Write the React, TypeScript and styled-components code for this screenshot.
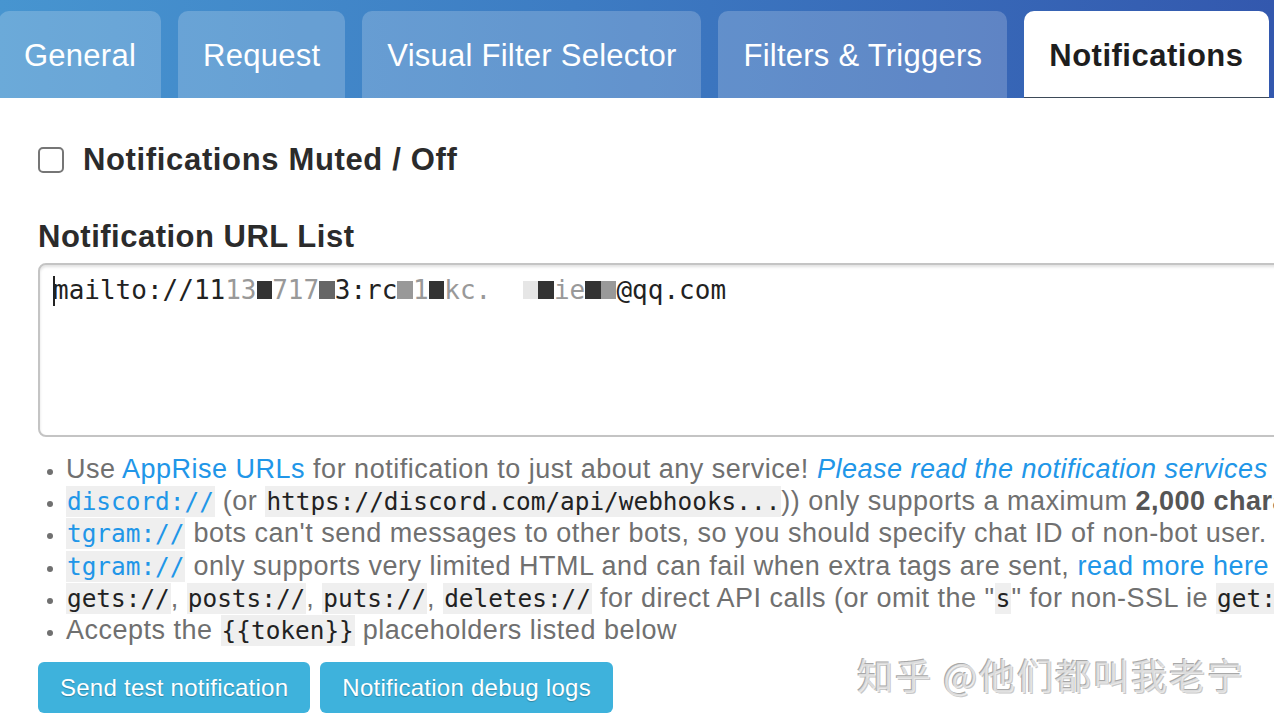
import React from "react";
import styled, { createGlobalStyle } from "styled-components";

const GlobalStyle = createGlobalStyle`
  html, body {
    margin: 0;
    padding: 0;
    background: #fff;
    overflow: hidden;
  }
  body {
    font-family: "Liberation Sans", Arial, sans-serif;
    color: #333;
  }
`;

const Page = styled.div`
  position: relative;
  width: 1274px;
  height: 726px;
  overflow: hidden;
  background: #fff;
`;

// tab bar

const TabBar = styled.nav`
  display: flex;
  align-items: flex-end;
  gap: 17px;
  height: 98px;
  margin-left: -1px;
  background: linear-gradient(90deg, #4795d0 0%, #3d7cc3 45%, #3358ae 100%);
`;

const Tab = styled.div<{ $active?: boolean }>`
  display: flex;
  align-items: center;
  flex-shrink: 0;
  height: 87px;
  padding: 3px 25px 0;
  box-sizing: border-box;
  border-radius: 10px 10px 0 0;
  font-size: 31px;
  white-space: nowrap;
  letter-spacing: ${({ $active }) => ($active ? "0.5px" : "0.25px")};
  font-weight: ${({ $active }) => ($active ? 700 : 400)};
  color: ${({ $active }) => ($active ? "#1e1e1e" : "#fff")};
  background: ${({ $active }) => ($active ? "#fff" : "rgba(255, 255, 255, 0.2)")};
  border-bottom: 1px solid ${({ $active }) => ($active ? "#3d4a58" : "transparent")};
`;

// body

const Content = styled.div`
  display: flex;
  flex-direction: column;
  padding: 0 0 0 38px;
  width: 1500px;
`;

const MuteRow = styled.label`
  display: flex;
  align-items: center;
  gap: 19px;
  margin-top: 47px;
  height: 30px;
`;

const Checkbox = styled.span`
  width: 26px;
  height: 26px;
  box-sizing: border-box;
  border: 2px solid #767676;
  border-radius: 5px;
  background: #fff;
`;

const BigLabel = styled.span`
  font-size: 31px;
  font-weight: 700;
  letter-spacing: 0.65px;
  color: #2b2b2b;
`;

const SectionTitle = styled.h3`
  margin: 45px 0 0;
  font-size: 31px;
  font-weight: 700;
  letter-spacing: 0.5px;
  color: #2b2b2b;
  line-height: 34px;
`;

const UrlBox = styled.div`
  margin-top: 9px;
  height: 174px;
  box-sizing: border-box;
  border: 2px solid #c4c4c4;
  border-radius: 8px;
  box-shadow: inset 0 2px 3px rgba(0, 0, 0, 0.12);
  padding: 9px 13px;
  font-family: "DejaVu Sans Mono", "Liberation Mono", monospace;
  font-size: 26px;
  line-height: 32px;
  color: #222;
  white-space: pre;
`;

const Caret = styled.span`
  display: inline-block;
  width: 2px;
  height: 30px;
  margin-right: -2px;
  vertical-align: -7px;
  background: #222;
`;

const Redact = styled.span<{ $tone: string }>`
  display: inline-block;
  width: 1ch;
  height: 18px;
  background: ${({ $tone }) => $tone};
`;

const Faint = styled.span`
  color: #999;
`;

const HintList = styled.ul`
  margin: 16px 0 0;
  padding-left: 28px;
  font-size: 27px;
  letter-spacing: 0.5px;
  color: #707070;
  white-space: nowrap;

  li {
    height: 32.2px;
    line-height: 32px;
  }
  li::marker {
    font-size: 20px;
  }
`;

const Link = styled.a<{ $italic?: boolean }>`
  color: #2196e8;
  text-decoration: none;
  font-style: ${({ $italic }) => ($italic ? "italic" : "normal")};
`;

const Code = styled.code<{ $link?: boolean }>`
  font-family: "DejaVu Sans Mono", "Liberation Mono", monospace;
  font-size: 24.4px;
  letter-spacing: 0;
  line-height: 28px;
  padding: 1px 1px;
  background: #efefef;
  color: ${({ $link }) => ($link ? "#2196e8" : "#222")};
`;

const Strong = styled.b`
  color: #555;
`;

const ButtonRow = styled.div`
  display: flex;
  gap: 10px;
  margin-top: 16px;
`;

const Button = styled.button`
  height: 51px;
  padding: 0 22px;
  border: none;
  border-radius: 6px;
  background: #3eb2dc;
  color: #fff;
  font-family: "Liberation Sans", Arial, sans-serif;
  font-size: 24px;
  letter-spacing: 0.25px;
  text-shadow: 0 1px 1px rgba(0, 0, 0, 0.25);
  cursor: pointer;
`;

const Watermark = styled.div`
  position: absolute;
  left: 857px;
  top: 648px;
  font-family: "Noto Sans CJK SC", sans-serif;
  font-size: 36px;
  color: rgba(255, 255, 255, 0.6);
  text-shadow: -1px -1px 0 #a8a8a8, 1px 1px 0 #c8c8c8;
  letter-spacing: 2px;
`;

const tabs = ["General", "Request", "Visual Filter Selector", "Filters & Triggers", "Notifications"];

export default function App() {
  return (
    <Page>
      <GlobalStyle />
      <TabBar>
        {tabs.map((t) => (
          <Tab key={t} $active={t === "Notifications"}>
            {t}
          </Tab>
        ))}
      </TabBar>

      <Content>
        <MuteRow>
          <Checkbox />
          <BigLabel>Notifications Muted / Off</BigLabel>
        </MuteRow>

        <SectionTitle>Notification URL List</SectionTitle>

        <UrlBox>
          <Caret />
          mailto://11<Faint>13</Faint>
          <Redact $tone="#333" />
          <Faint>717</Faint>
          <Redact $tone="#666" />
          3:rc
          <Redact $tone="#999" />
          <Faint>1</Faint>
          <Redact $tone="#333" />
          <Faint>kc.</Faint>
          {"  "}
          <Redact $tone="#e6e6e6" />
          <Redact $tone="#333" />
          <Faint>ie</Faint>
          <Redact $tone="#333" />
          <Redact $tone="#999" />
          @qq.com
        </UrlBox>

        <HintList>
          <li>
            Use <Link>AppRise URLs</Link> for notification to just about any service!{" "}
            <Link $italic>Please read the notification services wiki</Link>
          </li>
          <li>
            <Code $link>discord://</Code> (or <Code>https://discord.com/api/webhooks...</Code>)) only supports a maximum{" "}
            <Strong>2,000 characters</Strong>
          </li>
          <li>
            <Code $link>tgram://</Code> bots can't send messages to other bots, so you should specify chat ID of non-bot
            user.
          </li>
          <li>
            <Code $link>tgram://</Code> only supports very limited HTML and can fail when extra tags are sent,{" "}
            <Link>read more here</Link>
          </li>
          <li>
            <Code>gets://</Code>, <Code>posts://</Code>, <Code>puts://</Code>, <Code>deletes://</Code> for direct API calls
            (or omit the "<Code>s</Code>" for non-SSL ie <Code>get://</Code>)
          </li>
          <li>
            Accepts the <Code>{"{{token}}"}</Code> placeholders listed below
          </li>
        </HintList>

        <ButtonRow>
          <Button>Send test notification</Button>
          <Button>Notification debug logs</Button>
        </ButtonRow>
      </Content>

      <Watermark>知乎 @他们都叫我老宁</Watermark>
    </Page>
  );
}
